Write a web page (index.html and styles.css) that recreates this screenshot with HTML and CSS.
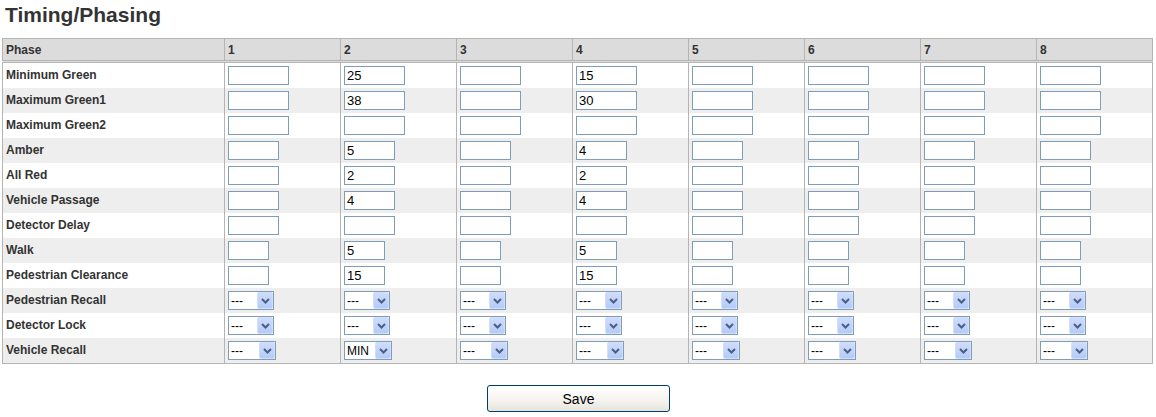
FILE: index.html
```html
<!DOCTYPE html>
<html>
<head>
<meta charset="utf-8">
<title>Timing/Phasing</title>
<link rel="stylesheet" href="styles.css">
</head>
<body>
<div class="page">
<h1 class="title">Timing/Phasing</h1>
<table class="grid">
<colgroup><col class="c-label"><col><col><col><col><col><col><col><col></colgroup>
<thead>
<tr><th>Phase</th><th>1</th><th>2</th><th>3</th><th>4</th><th>5</th><th>6</th><th>7</th><th>8</th></tr>
</thead>
<tbody>
<tr><td class="lbl">Minimum Green</td>
<td><input class="tb w8"></td><td><input class="tb w8" value="25"></td><td><input class="tb w8"></td><td><input class="tb w8" value="15"></td><td><input class="tb w8"></td><td><input class="tb w8"></td><td><input class="tb w8"></td><td><input class="tb w8"></td></tr>
<tr><td class="lbl">Maximum Green1</td>
<td><input class="tb w8"></td><td><input class="tb w8" value="38"></td><td><input class="tb w8"></td><td><input class="tb w8" value="30"></td><td><input class="tb w8"></td><td><input class="tb w8"></td><td><input class="tb w8"></td><td><input class="tb w8"></td></tr>
<tr><td class="lbl">Maximum Green2</td>
<td><input class="tb w8"></td><td><input class="tb w8"></td><td><input class="tb w8"></td><td><input class="tb w8"></td><td><input class="tb w8"></td><td><input class="tb w8"></td><td><input class="tb w8"></td><td><input class="tb w8"></td></tr>
<tr><td class="lbl">Amber</td>
<td><input class="tb w6"></td><td><input class="tb w6" value="5"></td><td><input class="tb w6"></td><td><input class="tb w6" value="4"></td><td><input class="tb w6"></td><td><input class="tb w6"></td><td><input class="tb w6"></td><td><input class="tb w6"></td></tr>
<tr><td class="lbl">All Red</td>
<td><input class="tb w6"></td><td><input class="tb w6" value="2"></td><td><input class="tb w6"></td><td><input class="tb w6" value="2"></td><td><input class="tb w6"></td><td><input class="tb w6"></td><td><input class="tb w6"></td><td><input class="tb w6"></td></tr>
<tr><td class="lbl">Vehicle Passage</td>
<td><input class="tb w6"></td><td><input class="tb w6" value="4"></td><td><input class="tb w6"></td><td><input class="tb w6" value="4"></td><td><input class="tb w6"></td><td><input class="tb w6"></td><td><input class="tb w6"></td><td><input class="tb w6"></td></tr>
<tr><td class="lbl">Detector Delay</td>
<td><input class="tb w6"></td><td><input class="tb w6"></td><td><input class="tb w6"></td><td><input class="tb w6"></td><td><input class="tb w6"></td><td><input class="tb w6"></td><td><input class="tb w6"></td><td><input class="tb w6"></td></tr>
<tr><td class="lbl">Walk</td>
<td><input class="tb w4"></td><td><input class="tb w4" value="5"></td><td><input class="tb w4"></td><td><input class="tb w4" value="5"></td><td><input class="tb w4"></td><td><input class="tb w4"></td><td><input class="tb w4"></td><td><input class="tb w4"></td></tr>
<tr><td class="lbl">Pedestrian Clearance</td>
<td><input class="tb w4"></td><td><input class="tb w4" value="15"></td><td><input class="tb w4"></td><td><input class="tb w4" value="15"></td><td><input class="tb w4"></td><td><input class="tb w4"></td><td><input class="tb w4"></td><td><input class="tb w4"></td></tr>
<tr><td class="lbl">Pedestrian Recall</td>
<td><span class="sel s46"><select><option>---</option></select><span class="arr"><svg width="9" height="6" viewBox="0 0 9 6"><path d="M1 1L4.5 4.5L8 1" stroke="#4b5f86" stroke-width="2" fill="none"/></svg></span></span></td>
<td><span class="sel s46"><select><option>---</option></select><span class="arr"><svg width="9" height="6" viewBox="0 0 9 6"><path d="M1 1L4.5 4.5L8 1" stroke="#4b5f86" stroke-width="2" fill="none"/></svg></span></span></td>
<td><span class="sel s46"><select><option>---</option></select><span class="arr"><svg width="9" height="6" viewBox="0 0 9 6"><path d="M1 1L4.5 4.5L8 1" stroke="#4b5f86" stroke-width="2" fill="none"/></svg></span></span></td>
<td><span class="sel s46"><select><option>---</option></select><span class="arr"><svg width="9" height="6" viewBox="0 0 9 6"><path d="M1 1L4.5 4.5L8 1" stroke="#4b5f86" stroke-width="2" fill="none"/></svg></span></span></td>
<td><span class="sel s46"><select><option>---</option></select><span class="arr"><svg width="9" height="6" viewBox="0 0 9 6"><path d="M1 1L4.5 4.5L8 1" stroke="#4b5f86" stroke-width="2" fill="none"/></svg></span></span></td>
<td><span class="sel s46"><select><option>---</option></select><span class="arr"><svg width="9" height="6" viewBox="0 0 9 6"><path d="M1 1L4.5 4.5L8 1" stroke="#4b5f86" stroke-width="2" fill="none"/></svg></span></span></td>
<td><span class="sel s46"><select><option>---</option></select><span class="arr"><svg width="9" height="6" viewBox="0 0 9 6"><path d="M1 1L4.5 4.5L8 1" stroke="#4b5f86" stroke-width="2" fill="none"/></svg></span></span></td>
<td><span class="sel s46"><select><option>---</option></select><span class="arr"><svg width="9" height="6" viewBox="0 0 9 6"><path d="M1 1L4.5 4.5L8 1" stroke="#4b5f86" stroke-width="2" fill="none"/></svg></span></span></td>
</tr>
<tr><td class="lbl">Detector Lock</td>
<td><span class="sel s46"><select><option>---</option></select><span class="arr"><svg width="9" height="6" viewBox="0 0 9 6"><path d="M1 1L4.5 4.5L8 1" stroke="#4b5f86" stroke-width="2" fill="none"/></svg></span></span></td>
<td><span class="sel s46"><select><option>---</option></select><span class="arr"><svg width="9" height="6" viewBox="0 0 9 6"><path d="M1 1L4.5 4.5L8 1" stroke="#4b5f86" stroke-width="2" fill="none"/></svg></span></span></td>
<td><span class="sel s46"><select><option>---</option></select><span class="arr"><svg width="9" height="6" viewBox="0 0 9 6"><path d="M1 1L4.5 4.5L8 1" stroke="#4b5f86" stroke-width="2" fill="none"/></svg></span></span></td>
<td><span class="sel s46"><select><option>---</option></select><span class="arr"><svg width="9" height="6" viewBox="0 0 9 6"><path d="M1 1L4.5 4.5L8 1" stroke="#4b5f86" stroke-width="2" fill="none"/></svg></span></span></td>
<td><span class="sel s46"><select><option>---</option></select><span class="arr"><svg width="9" height="6" viewBox="0 0 9 6"><path d="M1 1L4.5 4.5L8 1" stroke="#4b5f86" stroke-width="2" fill="none"/></svg></span></span></td>
<td><span class="sel s46"><select><option>---</option></select><span class="arr"><svg width="9" height="6" viewBox="0 0 9 6"><path d="M1 1L4.5 4.5L8 1" stroke="#4b5f86" stroke-width="2" fill="none"/></svg></span></span></td>
<td><span class="sel s46"><select><option>---</option></select><span class="arr"><svg width="9" height="6" viewBox="0 0 9 6"><path d="M1 1L4.5 4.5L8 1" stroke="#4b5f86" stroke-width="2" fill="none"/></svg></span></span></td>
<td><span class="sel s46"><select><option>---</option></select><span class="arr"><svg width="9" height="6" viewBox="0 0 9 6"><path d="M1 1L4.5 4.5L8 1" stroke="#4b5f86" stroke-width="2" fill="none"/></svg></span></span></td>
</tr>
<tr><td class="lbl">Vehicle Recall</td>
<td><span class="sel s48"><select><option>---</option></select><span class="arr"><svg width="9" height="6" viewBox="0 0 9 6"><path d="M1 1L4.5 4.5L8 1" stroke="#4b5f86" stroke-width="2" fill="none"/></svg></span></span></td>
<td><span class="sel s48"><select><option>MIN</option></select><span class="arr"><svg width="9" height="6" viewBox="0 0 9 6"><path d="M1 1L4.5 4.5L8 1" stroke="#4b5f86" stroke-width="2" fill="none"/></svg></span></span></td>
<td><span class="sel s48"><select><option>---</option></select><span class="arr"><svg width="9" height="6" viewBox="0 0 9 6"><path d="M1 1L4.5 4.5L8 1" stroke="#4b5f86" stroke-width="2" fill="none"/></svg></span></span></td>
<td><span class="sel s48"><select><option>---</option></select><span class="arr"><svg width="9" height="6" viewBox="0 0 9 6"><path d="M1 1L4.5 4.5L8 1" stroke="#4b5f86" stroke-width="2" fill="none"/></svg></span></span></td>
<td><span class="sel s48"><select><option>---</option></select><span class="arr"><svg width="9" height="6" viewBox="0 0 9 6"><path d="M1 1L4.5 4.5L8 1" stroke="#4b5f86" stroke-width="2" fill="none"/></svg></span></span></td>
<td><span class="sel s48"><select><option>---</option></select><span class="arr"><svg width="9" height="6" viewBox="0 0 9 6"><path d="M1 1L4.5 4.5L8 1" stroke="#4b5f86" stroke-width="2" fill="none"/></svg></span></span></td>
<td><span class="sel s48"><select><option>---</option></select><span class="arr"><svg width="9" height="6" viewBox="0 0 9 6"><path d="M1 1L4.5 4.5L8 1" stroke="#4b5f86" stroke-width="2" fill="none"/></svg></span></span></td>
<td><span class="sel s48"><select><option>---</option></select><span class="arr"><svg width="9" height="6" viewBox="0 0 9 6"><path d="M1 1L4.5 4.5L8 1" stroke="#4b5f86" stroke-width="2" fill="none"/></svg></span></span></td>
</tr>
</tbody>
</table>
<div class="actions"><button class="save" type="button">Save</button></div>
</div>
</body>
</html>
```
FILE: styles.css
```css
html, body {
  margin: 0;
  padding: 0;
  background: #fff;
}
body {
  font-family: "Liberation Sans", Arial, sans-serif;
  color: #333;
}
.page {
  padding: 3px 2px 0 2px;
}
.title {
  margin: 0 0 11px 3px;
  font-size: 21px;
  line-height: 24px;
  font-weight: bold;
  color: #333;
}
.grid {
  width: 1151px;
  border-collapse: collapse;
  table-layout: fixed;
  border: 1px solid #b4b4b4;
  font-size: 12px;
}
.c-label {
  width: 222px;
}
.grid th {
  background: #dcdcdc;
  height: 21px;
  padding: 0 3px;
  text-align: left;
  font-weight: bold;
  color: #333;
  border-left: 1px solid #b4b4b4;
  border-bottom: 3px double #b4b4b4;
}
.grid td {
  padding: 3px 3px;
  border-left: 1px solid #b4b4b4;
  vertical-align: middle;
}
.grid th:first-child,
.grid td:first-child {
  border-left: 0;
}
.grid tbody tr:nth-child(even) td {
  background: #eeeeee;
}
.lbl {
  font-weight: bold;
  line-height: 19px;
  color: #333;
}
.tb {
  display: block;
  box-sizing: border-box;
  height: 19px;
  margin: 0;
  padding: 0 2px;
  border: 1px solid #7f9db9;
  background: #fff;
  font-family: "Liberation Sans", Arial, sans-serif;
  font-size: 13px;
  color: #000;
  outline: none;
}
.w8 { width: 61px; }
.w6 { width: 51px; }
.w4 { width: 41px; }
.sel {
  position: relative;
  display: block;
  height: 19px;
}
.s46 { width: 46px; }
.s48 { width: 48px; }
.sel select {
  -webkit-appearance: none;
  appearance: none;
  display: block;
  box-sizing: border-box;
  width: 100%;
  height: 19px;
  margin: 0;
  padding: 0 0 0 2px;
  border: 1px solid #7f9db9;
  border-radius: 0;
  background: #fff;
  font-family: "Liberation Sans", Arial, sans-serif;
  font-size: 12px;
  color: #000;
  outline: none;
}
.arr {
  position: absolute;
  top: 1px;
  right: 1px;
  width: 16px;
  height: 17px;
  box-sizing: border-box;
  border: 1px solid #d2defa;
  border-radius: 2px;
  background: linear-gradient(#cfdcfb, #b4cbf7);
  display: flex;
  align-items: center;
  justify-content: center;
  pointer-events: none;
}
.actions {
  display: flex;
  justify-content: center;
  padding-top: 21px;
  width: 1153px;
}
.save {
  width: 183px;
  height: 27px;
  border: 1px solid #003c74;
  border-radius: 3px;
  background: linear-gradient(#ffffff, #f4f3ee 60%, #e6e4da);
  font-family: "Liberation Sans", Arial, sans-serif;
  font-size: 14px;
  color: #000;
  padding: 0;
}
```
